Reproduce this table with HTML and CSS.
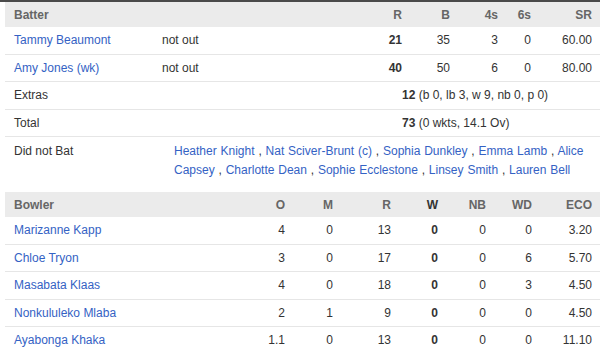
FILE: index.html
```html
<!DOCTYPE html>
<html lang="en">
<head>
    <meta charset="UTF-8">
    <meta name="viewport" content="width=device-width, initial-scale=1.0">
    <title>Scorecard</title>
    <link rel="stylesheet" href="styles.css">
</head>
<body>
    <div class="topbar"></div>
    <div class="card">
        <!-- batting -->
        <div class="bat head">
            <span>Batter</span>
            <span></span>
            <span class="num">R</span>
            <span class="num">B</span>
            <span class="num">4s</span>
            <span class="num">6s</span>
            <span class="num">SR</span>
        </div>
        <div class="bat">
            <a href="#">Tammy Beaumont</a>
            <span>not out</span>
            <span class="num b">21</span>
            <span class="num">35</span>
            <span class="num">3</span>
            <span class="num">0</span>
            <span class="num">60.00</span>
        </div>
        <div class="bat">
            <a href="#">Amy Jones (wk)</a>
            <span>not out</span>
            <span class="num b">40</span>
            <span class="num">50</span>
            <span class="num">6</span>
            <span class="num">0</span>
            <span class="num">80.00</span>
        </div>
        <div class="bat">
            <span>Extras</span>
            <span class="total"><b>12</b> (b 0, lb 3, w 9, nb 0, p 0)</span>
        </div>
        <div class="bat">
            <span>Total</span>
            <span class="total"><b>73</b> (0 wkts, 14.1 Ov)</span>
        </div>
        <div class="dnb">
            <span>Did not Bat</span>
            <p class="names"><a href="#">Heather Knight</a> , <a href="#">Nat Sciver-Brunt (c)</a> , <a href="#">Sophia Dunkley</a> , <a href="#">Emma Lamb</a> , <a href="#">Alice Capsey</a> , <a href="#">Charlotte Dean</a> , <a href="#">Sophie Ecclestone</a> , <a href="#">Linsey Smith</a> , <a href="#">Lauren Bell</a></p>
        </div>

        <!-- bowling -->
        <div class="bowl head">
            <span>Bowler</span>
            <span class="num">O</span>
            <span class="num">M</span>
            <span class="num">R</span>
            <span class="num b">W</span>
            <span class="num">NB</span>
            <span class="num">WD</span>
            <span class="num">ECO</span>
        </div>
        <div class="bowl">
            <a href="#">Marizanne Kapp</a>
            <span class="num">4</span><span class="num">0</span><span class="num">13</span><span class="num b">0</span><span class="num">0</span><span class="num">0</span><span class="num">3.20</span>
        </div>
        <div class="bowl">
            <a href="#">Chloe Tryon</a>
            <span class="num">3</span><span class="num">0</span><span class="num">17</span><span class="num b">0</span><span class="num">0</span><span class="num">6</span><span class="num">5.70</span>
        </div>
        <div class="bowl">
            <a href="#">Masabata Klaas</a>
            <span class="num">4</span><span class="num">0</span><span class="num">18</span><span class="num b">0</span><span class="num">0</span><span class="num">3</span><span class="num">4.50</span>
        </div>
        <div class="bowl">
            <a href="#">Nonkululeko Mlaba</a>
            <span class="num">2</span><span class="num">1</span><span class="num">9</span><span class="num b">0</span><span class="num">0</span><span class="num">0</span><span class="num">4.50</span>
        </div>
        <div class="bowl last">
            <a href="#">Ayabonga Khaka</a>
            <span class="num">1.1</span><span class="num">0</span><span class="num">13</span><span class="num b">0</span><span class="num">0</span><span class="num">0</span><span class="num">11.10</span>
        </div>
    </div>
</body>
</html>
```

FILE: styles.css
```css
body{
    margin: 0;
    background: #fff;
    font-family: "Liberation Sans", Arial, sans-serif;
    font-size: 12px;
    color: #333;
}
.topbar{
    height: 2px;
    background: #4a4a4a;
}
.card{
    margin-left: 5px;
}
a{
    color: #3462c4;
    text-decoration: none;
}

/* rows */
.bat, .bowl{
    display: grid;
    align-items: center;
    min-height: 26.5px;
    padding: 0 8px 0 9px;
    border-bottom: 1px solid #e6e6e6;
}
.bat{
    grid-template-columns: 148px 200px 40px 48px 48px 33px 61px;
}
.bowl{
    grid-template-columns: 231px 40px 48px 58px 47px 48px 46px 60px;
}
.head{
    min-height: 25px;
    background: #ebebeb;
    border-bottom: none;
    font-weight: bold;
    color: #666;
}
.head .b{ color: #333; }
.bowl.head{ margin-top: 9px; }
.bowl.last{ border-bottom: none; }

.num{ text-align: right; }
.b{ font-weight: bold; }
.total{ grid-column: 4 / -1; }

/* did not bat */
.dnb{
    display: grid;
    grid-template-columns: 160px 1fr;
    padding: 5px 8px 3px 9px;
    line-height: 19px;
}
.names{
    margin: 0;
    word-spacing: 0.5px;
}
```
